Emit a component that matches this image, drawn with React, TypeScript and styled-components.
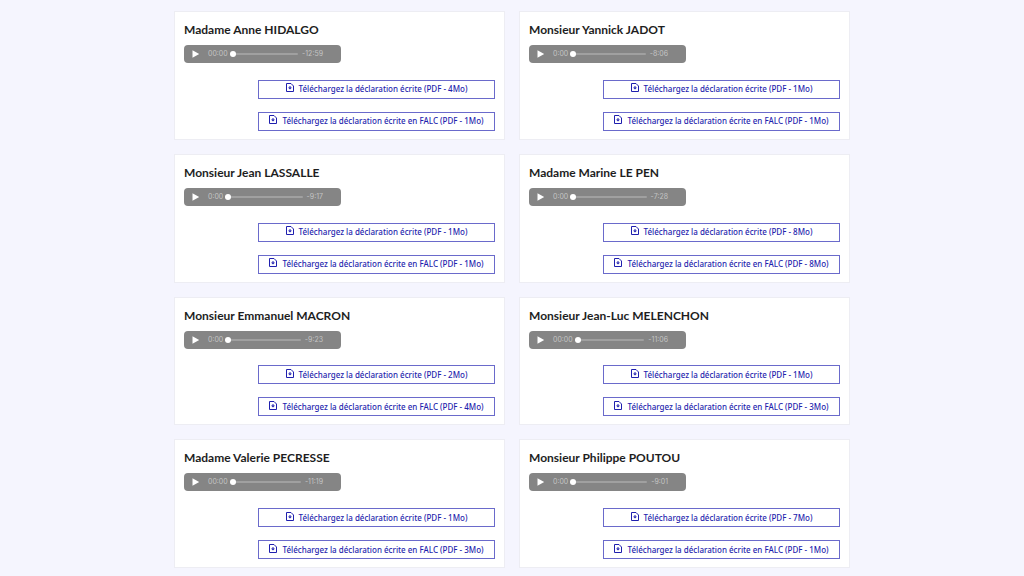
import React, { useId } from "react";
import styled, { createGlobalStyle } from "styled-components";

const GlobalStyle = createGlobalStyle`
  *, *::before, *::after { box-sizing: border-box; }
  body {
    margin: 0;
    background: #f5f5fe;
    color: #1e1e1e;
    font-family: Lato, "Open Sans", sans-serif;
  }
`;

const Page = styled.main`
  display: grid;
  grid-template-columns: 1fr 1fr;
  grid-auto-rows: 1fr;
  gap: 14px;
  max-width: 676px;
  min-height: 100vh;
  margin: 0 auto;
  padding: 11px 0 8px;
`;

const Card = styled.article`
  display: flex;
  flex-direction: column;
  padding: 9px 9px 8px;
  border: 1px solid #ededf3;
  background: #fff;
`;

const Name = styled.h2`
  margin: 0;
  font-size: 12px;
  line-height: 18px;
  font-weight: 700;
`;

const Player = styled.div`
  display: flex;
  align-items: center;
  width: 157px;
  height: 18px;
  margin-top: 6px;
  padding: 0 18px 0 8px;
  border-radius: 4px;
  background: #858585;
  color: #c4c4c4;
  font-family: Inter, sans-serif;
  font-size: 7px;
  line-height: 10px;
`;

const PlayButton = styled.button`
  display: flex;
  width: 16px;
  padding: 0;
  border: 0;
  background: none;
  color: #fff;
  cursor: pointer;
`;

const Seek = styled.input`
  appearance: none;
  flex: 1;
  min-width: 0;
  height: 6px;
  margin: 0 4px 0 2px;
  background: none;

  &::-webkit-slider-runnable-track {
    height: 2px;
    border-radius: 1px;
    background: #a0a0a0;
  }
  &::-webkit-slider-thumb {
    appearance: none;
    width: 6px;
    height: 6px;
    margin-top: -2px;
    border-radius: 50%;
    background: #fff;
  }
`;

const Downloads = styled.div`
  display: flex;
  flex-direction: column;
  gap: 13px;
  width: 237px;
  margin: auto 0 0 auto;
`;

const Download = styled.a`
  display: flex;
  align-items: center;
  justify-content: center;
  gap: 5px;
  height: 19px;
  border: 1px solid #6a6acb;
  color: #1f1fae;
  font-family: "Noto Sans", sans-serif;
  font-size: 8px;
  font-weight: 500;
  line-height: 12px;
  text-decoration: none;
  white-space: nowrap;
`;

const Icon = styled.svg`
  display: block;
  margin-bottom: 3px;
`;

const DownloadIcon = () => (
  <Icon width="8" height="9" viewBox="0 0 16 18" fill="none" stroke="currentColor" strokeWidth="2" aria-hidden="true">
    <path d="M1 1h9l5 5v11H1z" strokeLinejoin="round" />
    <path d="M8 6v4" />
    <path d="M4 9h8l-4 4z" fill="currentColor" stroke="none" />
  </Icon>
);

type Candidate = { name: string; start: string; left: string; pdf: number; falc: number };

const candidates: Candidate[] = [
  { name: "Madame Anne HIDALGO", start: "00:00", left: "-12:59", pdf: 4, falc: 1 },
  { name: "Monsieur Yannick JADOT", start: "0:00", left: "-8:06", pdf: 1, falc: 1 },
  { name: "Monsieur Jean LASSALLE", start: "0:00", left: "-9:17", pdf: 1, falc: 1 },
  { name: "Madame Marine LE PEN", start: "0:00", left: "-7:28", pdf: 8, falc: 8 },
  { name: "Monsieur Emmanuel MACRON", start: "0:00", left: "-9:23", pdf: 2, falc: 4 },
  { name: "Monsieur Jean-Luc MELENCHON", start: "00:00", left: "-11:06", pdf: 1, falc: 3 },
  { name: "Madame Valerie PECRESSE", start: "00:00", left: "-11:19", pdf: 1, falc: 3 },
  { name: "Monsieur Philippe POUTOU", start: "0:00", left: "-9:01", pdf: 7, falc: 1 },
];

function CandidateCard({ name, start, left, pdf, falc }: Candidate) {
  const id = useId();
  return (
    <Card aria-labelledby={id}>
      <Name id={id}>{name}</Name>
      <Player>
        <PlayButton type="button" aria-label="Lecture">
          <svg width="8" height="8" viewBox="0 0 8 8" aria-hidden="true">
            <path d="M0.500 0.200L7.200 4L0.500 7.800z" fill="currentColor" />
          </svg>
        </PlayButton>
        <span>{start}</span>
        <Seek type="range" min={0} max={100} defaultValue={0} aria-label="Position" />
        <span>{left}</span>
      </Player>
      <Downloads>
        <Download href="#ecrite">
          <DownloadIcon />
          <span>Téléchargez la déclaration écrite (PDF - {pdf}Mo)</span>
        </Download>
        <Download href="#falc">
          <DownloadIcon />
          <span>Téléchargez la déclaration écrite en FALC (PDF - {falc}Mo)</span>
        </Download>
      </Downloads>
    </Card>
  );
}

export default function App() {
  return (
    <>
      <GlobalStyle />
      <Page>
        {candidates.map((c) => (
          <CandidateCard key={c.name} {...c} />
        ))}
      </Page>
    </>
  );
}
